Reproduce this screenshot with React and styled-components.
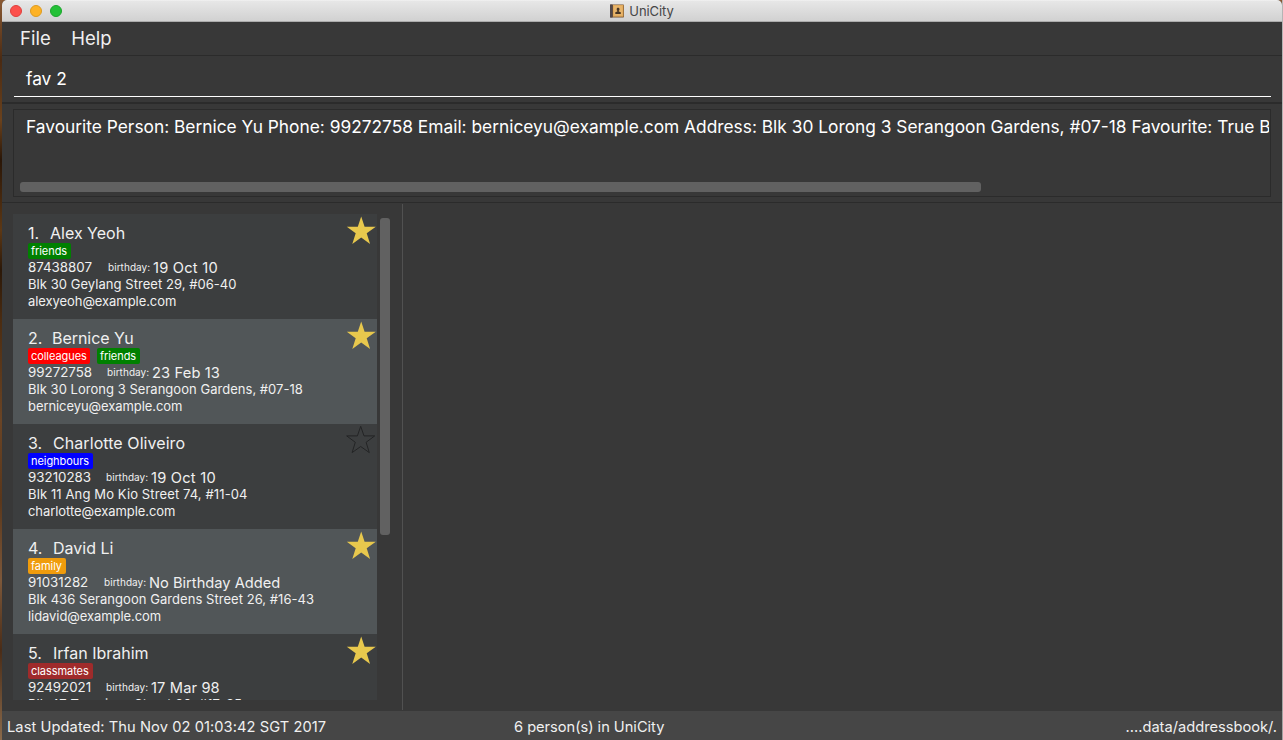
import React from 'react';
import styled, { createGlobalStyle } from 'styled-components';

const GlobalStyle = createGlobalStyle`
  * { box-sizing: border-box; }
  body { margin: 0; background: #383838; overflow: hidden; }
`;

const Desktop = styled.div`
  width: 1283px;
  height: 740px;
  padding: 0 1px 0 2px;
  overflow: hidden;
  font-family: Inter, 'Noto Sans', sans-serif;
  color: #f0f0f0;
  background:
    linear-gradient(#b5b5b5, #a2a2a2) right / 1px 100% no-repeat,
    linear-gradient(#8a5a34 0, #4a2a12 60px, #6b421d 120px, #2a1607 160px, #5d3815 230px, #2b1808 270px,
      #4b2c11 320px, #6a4425 420px, #5a371b 500px, #7d583a 580px, #4a2c17 650px, #8a6a4b 740px);
`;

const Window = styled.div`
  height: 100%;
  display: flex;
  flex-direction: column;
  background: #383838;
  border-radius: 5px 5px 0 0;
  overflow: hidden;
`;

const TitleBar = styled.header`
  position: relative;
  flex: none;
  height: 22px;
  display: flex;
  align-items: center;
  justify-content: center;
  background: linear-gradient(#f6f6f6 0, #e7e7e7 1px, #d1d1d1 21px);
  border-bottom: 1px solid #acacac;
`;

const Lights = styled.div`
  position: absolute;
  left: 8px;
  top: 5px;
  display: flex;
  gap: 8px;
`;

const Light = styled.span`
  width: 12px;
  height: 12px;
  border-radius: 50%;
  background: ${(p) => p.$fill};
  border: 1px solid ${(p) => p.$edge};
`;

const Title = styled.div`
  display: flex;
  align-items: center;
  gap: 5px;
  color: #464646;
`;

const Text = styled.span`
  flex: none;
  white-space: pre;
  font-size: ${(p) => p.$size}px;
  letter-spacing: ${(p) => p.$track || 0}px;
`;

const MenuBar = styled.nav`
  flex: none;
  height: 34px;
  display: flex;
  align-items: center;
  gap: 20.5px;
  padding: 0 18px 2px;
  border-bottom: 1px solid #2b2b2b;
`;

const CommandPane = styled.div`
  flex: none;
  height: 48px;
  padding: 6px 11px 0 12px;
  border-bottom: 2px solid #2b2b2b;
`;

const CommandField = styled.div`
  height: 35px;
  padding-left: 12px;
  line-height: 34px;
  color: #fff;
  border-bottom: 1px solid #fff;
`;

const ResultPane = styled.div`
  flex: none;
  height: 99px;
  padding: 5px 11px 0 11px;
  border-bottom: 1px solid #2b2b2b;
`;

const ResultBox = styled.div`
  height: 88px;
  border: 1px solid #2b2b2b;
  padding: 6px 1px 4px 6px;
  display: flex;
  flex-direction: column;
  justify-content: space-between;
  color: #fff;
`;

const ResultText = styled.div`
  overflow: hidden;
  padding-left: 6px;
  line-height: 22px;
  white-space: nowrap;
`;

const Thumb = styled.div`
  flex: none;
  width: ${(p) => p.$w}px;
  height: ${(p) => p.$h}px;
  border-radius: 3px;
  background: #616161;
`;

const Main = styled.main`
  flex: none;
  height: 508px;
  display: flex;
`;

const ListPane = styled.section`
  width: 401px;
  height: 506px;
  margin-top: 1px;
  padding: 10px 0 0 11px;
  display: flex;
  align-items: flex-start;
  gap: 3px;
  border-right: 1px solid #515151;

  & > ${Thumb} { margin-top: 4px; }
`;

const List = styled.div`
  width: 364px;
  height: 486px;
  overflow: hidden;
`;

const Card = styled.article`
  height: 105px;
  padding: 9px 1px 0 15px;
  display: flex;
  justify-content: space-between;
  background: ${(p) => (p.$alt ? '#515658' : '#3c3e3f')};
`;

const Details = styled.div`
  display: flex;
  flex-direction: column;
`;

const Line = styled.div`
  display: flex;
  height: ${(p) => p.$h || 17}px;
  line-height: ${(p) => p.$h || 17}px;
`;

const Tags = styled.div`
  display: flex;
  gap: 7px;
  height: 16px;
`;

const Tag = styled.span`
  width: ${(p) => p.$w}px;
  height: 16px;
  line-height: 16px;
  padding-left: 3px;
  border-radius: 2px;
  background: ${(p) => p.$color};
  color: #fff;
  font-size: 11px;
  white-space: nowrap;
  letter-spacing: -0.06px;
`;

const Cell = styled(Text)`
  width: ${(p) => p.$w}px;
`;

const Birthday = styled(Text)`
  line-height: 19px;
`;

const StarIcon = styled.svg`
  flex: none;
  width: 30px;
  height: 30px;
  margin-top: -7px;
  overflow: visible;
`;

const StatusBar = styled.footer`
  flex: none;
  height: 29px;
  padding: 0 5px;
  display: grid;
  grid-template-columns: 507px 1fr auto;
  line-height: 32px;
  background: #464646;
`;

function Star({ filled }) {
  return (
    <StarIcon viewBox="0 0 30 30">
      {filled ? (
        <path fill="#e8c84d" d="M15.2 .4 18.6 10.8H29.8L20.7 17.300 24.100 28 15.200 21.500 6.300 28 9.700 17.300.8 10.800H11.800Z" />
      ) : (
        <path
          fill="none"
          stroke="#232425"
          strokeWidth="1"
          d="M14.700 0.300 18 9.900H28.700L20.100 16.300 23.300 26.600 14.700 20.500 6.100 26.600 9.300 16.300.7 9.900H11.400Z"
        />
      )}
    </StarIcon>
  );
}

function BookIcon() {
  return (
    <svg width="14" height="14" viewBox="0 0 14 14">
      <rect x="0" y="0.5" width="14" height="13" rx="0.8" fill="#765330" />
      <rect x="0" y="0.5" width="2.5" height="13" fill="#51484a" />
      <rect x="3" y="1" width="10.4" height="11.7" fill="#e0a95a" />
      <rect x="4" y="2" width="8.4" height="9.5" fill="#e8b56b" />
      <path d="M8.100 3.800c1 0 1.500.7 1.400 1.600-.1.700-.4 1.100-.7 1.300v.8l2 .7V10H5.300V8.200l2-.7v-.8c-.3-.3-.6-.7-.6-1.300C6.600 4.500 7.100 3.800 8.100 3.800Z" fill="#493725" />
    </svg>
  );
}

const PEOPLE = [
  { index: '1.', indexW: 22, name: 'Alex Yeoh', tags: [['friends', 'green', 43]], phone: '87438807', phoneW: 80, birthday: '19 Oct 10', dateTrack: 0.22, address: 'Blk 30 Geylang Street 29, #06-40', addressTrack: 0.05, email: 'alexyeoh@example.com', star: true },
  { index: '2.', indexW: 24, name: 'Bernice Yu', nameTrack: -0.05, tags: [['colleagues', 'red', 62], ['friends', 'green', 43]], phone: '99272758', phoneW: 79, birthday: '23 Feb 13', dateTrack: 0.13, address: 'Blk 30 Lorong 3 Serangoon Gardens, #07-18', addressTrack: 0.03, email: 'berniceyu@example.com', star: true },
  { index: '3.', indexW: 25, name: 'Charlotte Oliveiro', nameTrack: 0.07, tags: [['neighbours', 'blue', 65]], phone: '93210283', phoneW: 78, birthday: '19 Oct 10', dateTrack: 0.22, address: 'Blk 11 Ang Mo Kio Street 74, #11-04', addressTrack: 0.12, email: 'charlotte@example.com', star: false },
  { index: '4.', indexW: 25, name: 'David Li', tags: [['family', '#f09c0c', 38]], phone: '91031282', phoneW: 76, birthday: 'No Birthday Added', dateTrack: 0, address: 'Blk 436 Serangoon Gardens Street 26, #16-43', addressTrack: 0.05, email: 'lidavid@example.com', star: true },
  { index: '5.', indexW: 25, name: 'Irfan Ibrahim', tags: [['classmates', '#9f2b2b', 65]], phone: '92492021', phoneW: 78, birthday: '17 Mar 98', dateTrack: 0.13, address: 'Blk 47 Tampines Street 20, #17-35', addressTrack: 0.09, star: true },
];

function PersonCard({ person, alt }) {
  return (
    <Card $alt={alt}>
      <Details>
        <Line $h={20}>
          <Cell $size={16} $w={person.indexW}>{person.index}</Cell>
          <Text $size={16} $track={person.nameTrack}>{person.name}</Text>
        </Line>
        <Tags>
          {person.tags.map(([label, color, w]) => (
            <Tag key={label} $color={color} $w={w}>{label}</Tag>
          ))}
        </Tags>
        <Line>
          <Cell $size={13.33} $w={person.phoneW}>{person.phone}</Cell>
          <Cell $size={10} $w={45} $track={0.05}>birthday:</Cell>
          <Birthday $size={14.67} $track={person.dateTrack}>{person.birthday}</Birthday>
        </Line>
        <Line><Text $size={13} $track={person.addressTrack}>{person.address}</Text></Line>
        {person.email && <Line><Text $size={13} $track={-0.07}>{person.email}</Text></Line>}
      </Details>
      <Star filled={person.star} />
    </Card>
  );
}

export default function App() {
  return (
    <Desktop>
      <GlobalStyle />
      <Window>
        <TitleBar>
          <Lights>
            <Light $fill="#fc504c" $edge="#df3f3c" />
            <Light $fill="#fdb225" $edge="#dd9a1f" />
            <Light $fill="#24c138" $edge="#1ba62c" />
          </Lights>
          <Title>
            <BookIcon />
            <Text $size={13} $track={-0.1}>UniCity</Text>
          </Title>
        </TitleBar>
        <MenuBar>
          <Text $size={18.5}>File</Text>
          <Text $size={18.5}>Help</Text>
        </MenuBar>
        <CommandPane>
          <CommandField><Text $size={17.33}>fav 2</Text></CommandField>
        </CommandPane>
        <ResultPane>
          <ResultBox>
            <ResultText>
              <Text $size={17.33}>
                Favourite Person: Bernice Yu Phone: 99272758 Email: berniceyu@example.com Address: Blk 30 Lorong 3 Serangoon Gardens, #07-18 Favourite: True Birthday: 23 Feb 13
              </Text>
            </ResultText>
            <Thumb $w={961} $h={10} />
          </ResultBox>
        </ResultPane>
        <Main>
          <ListPane>
            <List>
              {PEOPLE.map((person, i) => (
                <PersonCard key={person.name} person={person} alt={i % 2 === 1} />
              ))}
            </List>
            <Thumb $w={10} $h={317} />
          </ListPane>
        </Main>
        <StatusBar>
          <Text $size={14.67} $track={0.07}>Last Updated: Thu Nov 02 01:03:42 SGT 2017</Text>
          <Text $size={14.67} $track={-0.03}>6 person(s) in UniCity</Text>
          <Text $size={14.67}>....data/addressbook/.</Text>
        </StatusBar>
      </Window>
    </Desktop>
  );
}
